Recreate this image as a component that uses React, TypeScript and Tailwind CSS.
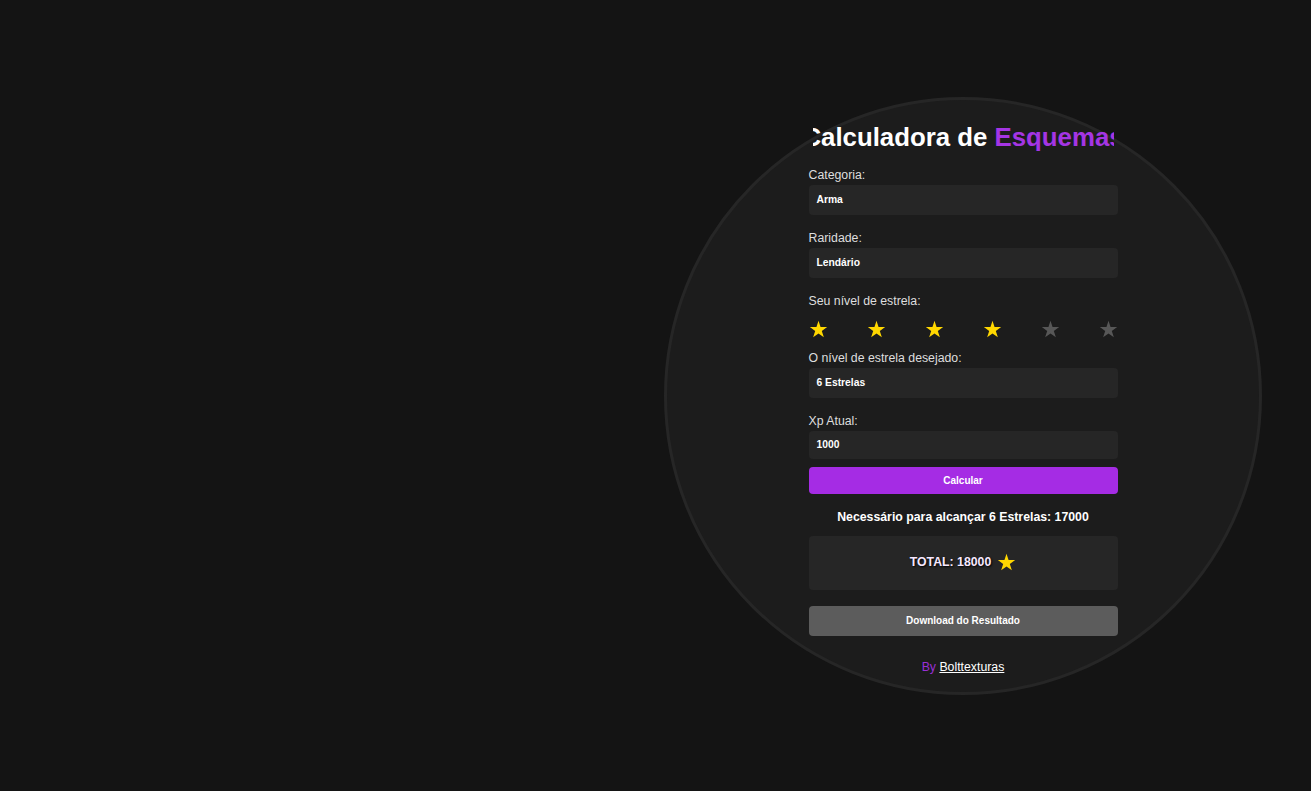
import React from "react";

const font = { fontFamily: '"Liberation Sans", Arial, sans-serif' };

function Star({ on, size = 19 }: { on: boolean; size?: number }) {
  return (
    <svg width={size} height={size} viewBox="0 0 24 24" className={on ? "fill-[#ffd700]" : "fill-[#575757]"}>
      <polygon points="12,1 14.59,8.94 22.94,8.95 16.18,13.86 18.76,21.8 12,16.9 5.24,21.8 7.82,13.86 1.06,8.95 9.41,8.94" />
    </svg>
  );
}

function Field({ label, value, h = "h-[30px]", last }: { label: string; value: string; h?: string; last?: boolean }) {
  return (
    <div className={last ? "" : "mb-[16px]"}>
      <label className="block text-[12.3px] leading-[14px] text-[#dedede] mb-[3px]">{label}</label>
      <div className={`${h} flex items-center rounded-[4px] bg-[#262626] px-2 text-[10.3px] font-bold text-white`}>{value}</div>
    </div>
  );
}

export default function App() {
  const level = 4;
  return (
    <div className="min-h-screen bg-[#141414] flex items-center pl-[664px]" style={font}>
      <div className="w-[598px] h-[598px] shrink-0 rounded-full border-[3px] border-[#262626] bg-[#1c1c1c] flex justify-center pt-[23px]">
        <div className="w-[309px] flex flex-col">
          <div className="mx-[4px] overflow-hidden flex justify-center mb-[16px]">
            <h1 className="shrink-0 whitespace-nowrap text-[25.8px] leading-[29px] font-bold text-white">
              Calculadora de <span className="text-[#a535e4]">Esquemas</span>
            </h1>
          </div>

          <Field label="Categoria:" value="Arma" />
          <Field label="Raridade:" value="Lendário" />

          <label className="block text-[12.3px] leading-[14px] text-[#dedede]">Seu nível de estrela:</label>
          <div className="flex justify-between mt-[12px] mb-[12px]">
            {[1, 2, 3, 4, 5, 6].map((i) => (
              <Star key={i} on={i <= level} />
            ))}
          </div>

          <Field label="O nível de estrela desejado:" value="6 Estrelas" />
          <Field label="Xp Atual:" value="1000" h="h-[28px]" last />

          <button className="mt-[8px] h-[27px] rounded-[4px] bg-[#a52ce4] text-[10px] font-bold text-white">
            Calcular
          </button>

          <p className="mt-[16px] text-center text-[12.3px] leading-[14px] font-bold text-white">
            Necessário para alcançar 6 Estrelas: 17000
          </p>

          <div className="mt-[12px] h-[54px] rounded-[4px] bg-[#262626] flex items-center justify-center gap-[6px]">
            <span className="text-[12.3px] font-bold text-[#f6e8ff] [text-shadow:1px_1px_2px_#000]">TOTAL: 18000</span>
            <Star on size={19} />
          </div>

          <button className="mt-[16px] h-[30px] rounded-[4px] bg-[#5c5c5c] text-[10px] font-bold text-white">
            Download do Resultado
          </button>

          <p className="mt-[24px] text-center text-[12.3px] leading-[14px] text-[#9a2fd6]">
            By <a href="#" className="text-white underline">Bolttexturas</a>
          </p>
        </div>
      </div>
    </div>
  );
}
